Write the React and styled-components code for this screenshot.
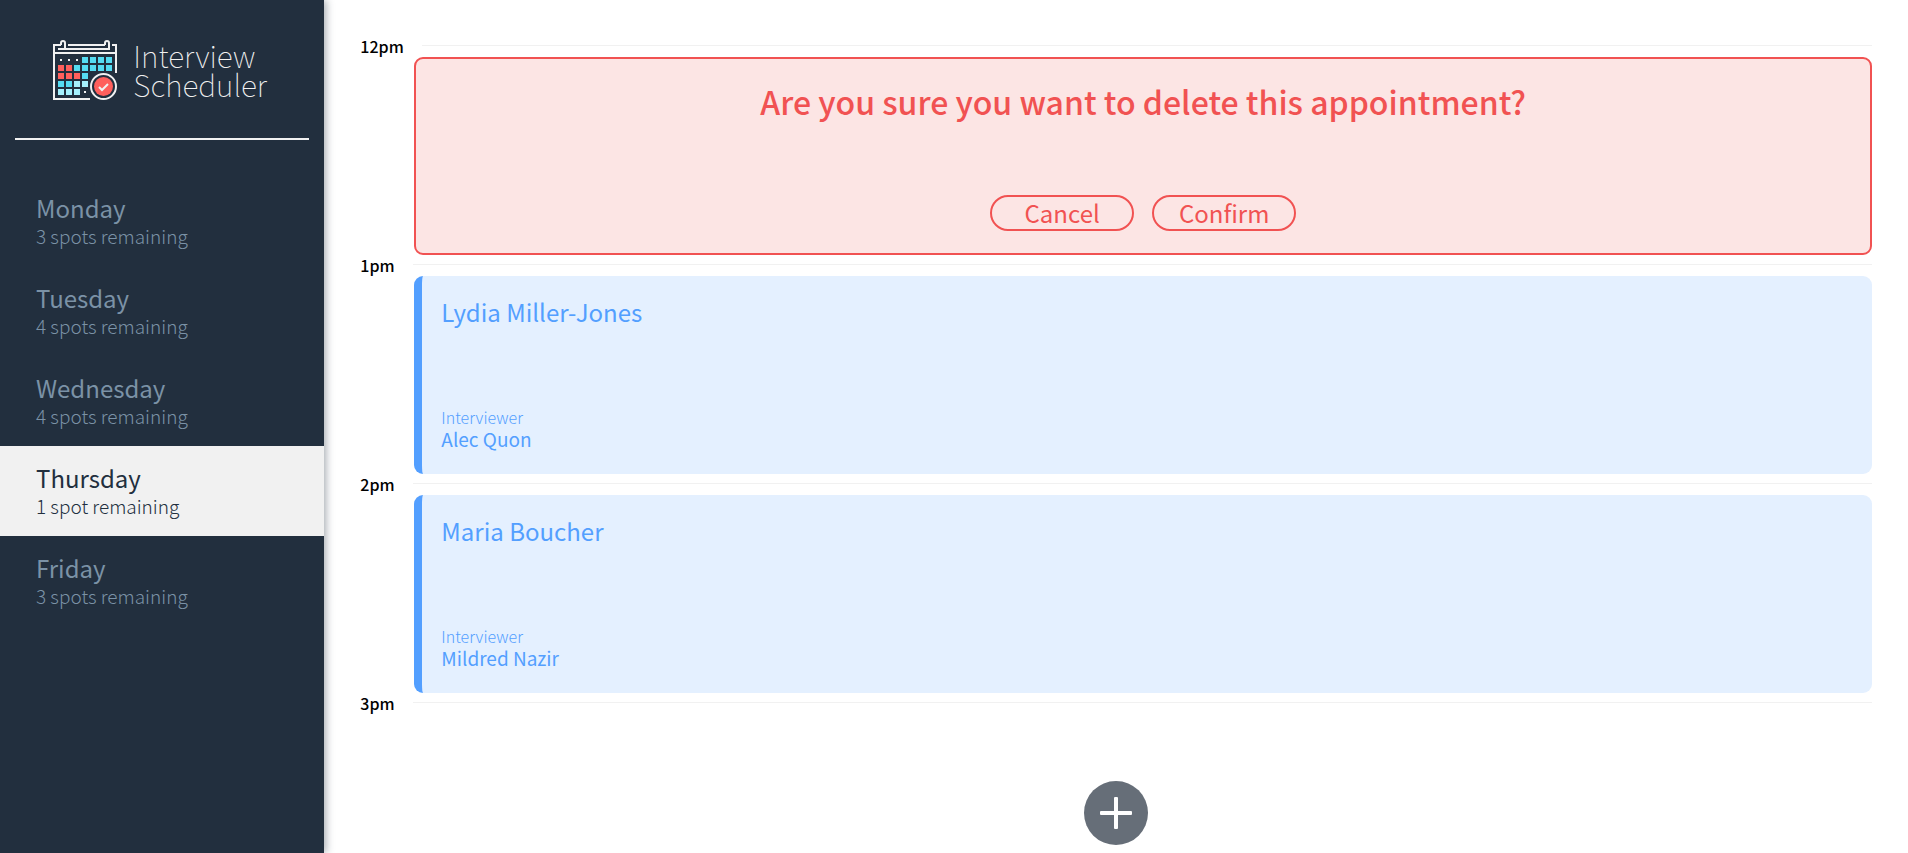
import React from "react";
import styled, { createGlobalStyle, css } from "styled-components";

const colors = {
  navy: "#222f3e",
  mist: "#f1f1f1",
  slate: "#7b92a6",
  blue: "#539fff",
  paleBlue: "#e4f0ff",
  red: "#f15252",
  palePink: "#fce5e4",
  grey: "#666e78",
};

const GlobalStyle = createGlobalStyle`
  *, *::before, *::after { box-sizing: border-box; }
  body {
    margin: 0;
    background: #fff;
    color: #000;
    font-family: "Noto Sans CJK SC", "Noto Sans", sans-serif;
    font-size: 16px;
    line-height: 24px;
  }
  h1, h2, h3, h4, p, ul { margin: 0; padding: 0; font-weight: 400; }
  button { font-family: inherit; cursor: pointer; }
`;

const Layout = styled.div`
  display: flex;
  height: 100vh;
`;

const Sidebar = styled.aside`
  flex: 0 0 17%;
  min-width: 280px;
  z-index: 1;
  background: ${colors.navy};
  box-shadow: 2px 0 8px rgba(34, 47, 62, 0.4);
`;

const Brand = styled.h1`
  display: flex;
  align-items: center;
  justify-content: center;
  gap: 16px;
  height: 138px;
  padding: 2px 4px 0 0;
  color: ${colors.mist};
`;

const BrandName = styled.span`
  font-size: 30px;
  font-weight: 100;
  line-height: 29px;
`;

const Separator = styled.hr`
  height: 2px;
  margin: 0 15px 36px;
  border: 0;
  background: ${colors.mist};
`;

const DayList = styled.ul`
  list-style: none;
`;

const DayButton = styled.button`
  display: flex;
  flex-direction: column;
  justify-content: center;
  width: 100%;
  height: 90px;
  padding: 0 36px 2px;
  border: 0;
  background: transparent;
  color: ${colors.slate};
  text-align: left;
  ${(p) =>
    p.$selected &&
    css`
      background: ${colors.mist};
      color: ${colors.navy};
    `}
`;

const DayName = styled.span`
  font-size: 24px;
  line-height: 32px;
`;

const Spots = styled.span`
  font-size: 19px;
  font-weight: 300;
  line-height: 24px;
`;

const Schedule = styled.main`
  flex: 1;
  min-width: 0;
  padding: 33px 36px 0;
  overflow-y: auto;
  scrollbar-width: none;
`;

const Slot = styled.article`
  display: flex;
  flex-direction: column;
  height: 219px;
`;

const SlotHeader = styled.header`
  display: flex;
  align-items: center;
  gap: 18px;
  height: 24px;
`;

const Time = styled.h4`
  padding-top: 2px;
  font-weight: 500;
`;

const Rule = styled.hr`
  flex: 1;
  height: 1px;
  margin: 0;
  border: 0;
  background: ${colors.mist};
`;

const Card = styled.section`
  display: flex;
  flex: none;
  flex-direction: column;
  justify-content: space-between;
  height: 198px;
  margin-left: 54px;
  border-radius: 9px;
`;

const BookedCard = styled(Card)`
  padding: 18px 20px 24px 19px;
  border-left: 8px solid ${colors.blue};
  background: ${colors.paleBlue};
  color: ${colors.blue};
`;

const ConfirmCard = styled(Card)`
  align-items: center;
  padding: 22px;
  border: 2px solid ${colors.red};
  background: ${colors.palePink};
  color: ${colors.red};
`;

const Student = styled.h2`
  font-size: 24px;
  line-height: 36px;
`;

const InterviewerLabel = styled.h4`
  font-weight: 300;
  line-height: 22px;
`;

const InterviewerName = styled.h3`
  font-size: 19px;
  line-height: 22px;
`;

const Question = styled.h2`
  font-size: 32px;
  font-weight: 500;
  line-height: 40px;
`;

const Actions = styled.div`
  display: flex;
  gap: 18px;
`;

const DangerButton = styled.button`
  width: 144px;
  height: 36px;
  padding: 0;
  border: 2px solid ${colors.red};
  border-radius: 18px;
  background: transparent;
  color: ${colors.red};
  font-size: 24px;
  line-height: 32px;
`;

const EmptySlot = styled.div`
  display: flex;
  flex: none;
  align-items: center;
  justify-content: center;
  height: 198px;
`;

const AddButton = styled.button`
  width: 64px;
  height: 64px;
  padding: 0;
  border: 0;
  border-radius: 50%;
  background: ${colors.grey};
  svg { display: block; }
`;

const RED = "#ff5f5c";
const CYAN = "#55dcf2";
const ICE = "#a5f0fc";

const cells = [
  [null, null, null, CYAN, CYAN, CYAN, CYAN],
  [RED, RED, CYAN, CYAN, CYAN, CYAN, CYAN],
  [RED, RED, RED, CYAN],
  [CYAN, CYAN, ICE, ICE],
  [ICE, ICE, ICE, null],
];

function CalendarLogo() {
  return (
    <svg width="64" height="60" viewBox="0 0 64 60" fill="none" aria-hidden="true">
      <g stroke={colors.mist} strokeWidth="2">
        <path d="M37 59H1V5H8M15 5H52M59 5H63V33M1 13H63" />
        <path d="M5 9H12V3a2 2 0 0 0-4 0V5M12 9H56V3a2 2 0 0 0-4 0V5" />
      </g>
      {cells.map((row, r) =>
        row.map((fill, c) =>
          fill ? (
            <rect key={`${r}-${c}`} x={5 + c * 8} y={17 + r * 8} width="6" height="6" fill={fill} />
          ) : (
            <rect key={`${r}-${c}`} x={7 + c * 8} y={19 + r * 8} width="2" height="2" fill={colors.mist} />
          )
        )
      )}
      <circle cx="50.500" cy="46.500" r="12.500" fill={colors.navy} stroke={colors.mist} strokeWidth="2" />
      <circle cx="50.500" cy="46.500" r="9.500" fill={RED} />
      <path d="M46 47l3 3 6-6" stroke={colors.mist} strokeWidth="2" />
    </svg>
  );
}

function PlusIcon() {
  return (
    <svg width="64" height="64" viewBox="0 0 64 64" fill="#fff" aria-hidden="true">
      <rect x="16" y="30" width="32" height="4" rx="1" />
      <rect x="30" y="16" width="4" height="32" rx="1" />
    </svg>
  );
}

const days = [
  { name: "Monday", spots: 3 },
  { name: "Tuesday", spots: 4 },
  { name: "Wednesday", spots: 4 },
  { name: "Thursday", spots: 1 },
  { name: "Friday", spots: 3 },
];

function TimeSlot({ time, children }) {
  return (
    <Slot>
      <SlotHeader>
        <Time>{time}</Time>
        <Rule />
      </SlotHeader>
      {children}
    </Slot>
  );
}

function Booking({ student, interviewer }) {
  return (
    <BookedCard>
      <Student>{student}</Student>
      <div>
        <InterviewerLabel>Interviewer</InterviewerLabel>
        <InterviewerName>{interviewer}</InterviewerName>
      </div>
    </BookedCard>
  );
}

export default function App() {
  const [selected, setSelected] = React.useState("Thursday");
  return (
    <Layout>
      <GlobalStyle />
      <Sidebar>
        <Brand>
          <CalendarLogo />
          <BrandName>
            Interview
            <br />
            Scheduler
          </BrandName>
        </Brand>
        <Separator />
        <nav aria-label="Days">
          <DayList>
            {days.map(({ name, spots }) => (
              <li key={name}>
                <DayButton $selected={name === selected} onClick={() => setSelected(name)}>
                  <DayName>{name}</DayName>
                  <Spots>{`${spots} ${spots === 1 ? "spot" : "spots"} remaining`}</Spots>
                </DayButton>
              </li>
            ))}
          </DayList>
        </nav>
      </Sidebar>
      <Schedule>
        <TimeSlot time="12pm">
          <ConfirmCard>
            <Question>Are you sure you want to delete this appointment?</Question>
            <Actions>
              <DangerButton>Cancel</DangerButton>
              <DangerButton>Confirm</DangerButton>
            </Actions>
          </ConfirmCard>
        </TimeSlot>
        <TimeSlot time="1pm">
          <Booking student="Lydia Miller-Jones" interviewer="Alec Quon" />
        </TimeSlot>
        <TimeSlot time="2pm">
          <Booking student="Maria Boucher" interviewer="Mildred Nazir" />
        </TimeSlot>
        <TimeSlot time="3pm">
          <EmptySlot>
            <AddButton aria-label="Add appointment">
              <PlusIcon />
            </AddButton>
          </EmptySlot>
        </TimeSlot>
      </Schedule>
    </Layout>
  );
}
